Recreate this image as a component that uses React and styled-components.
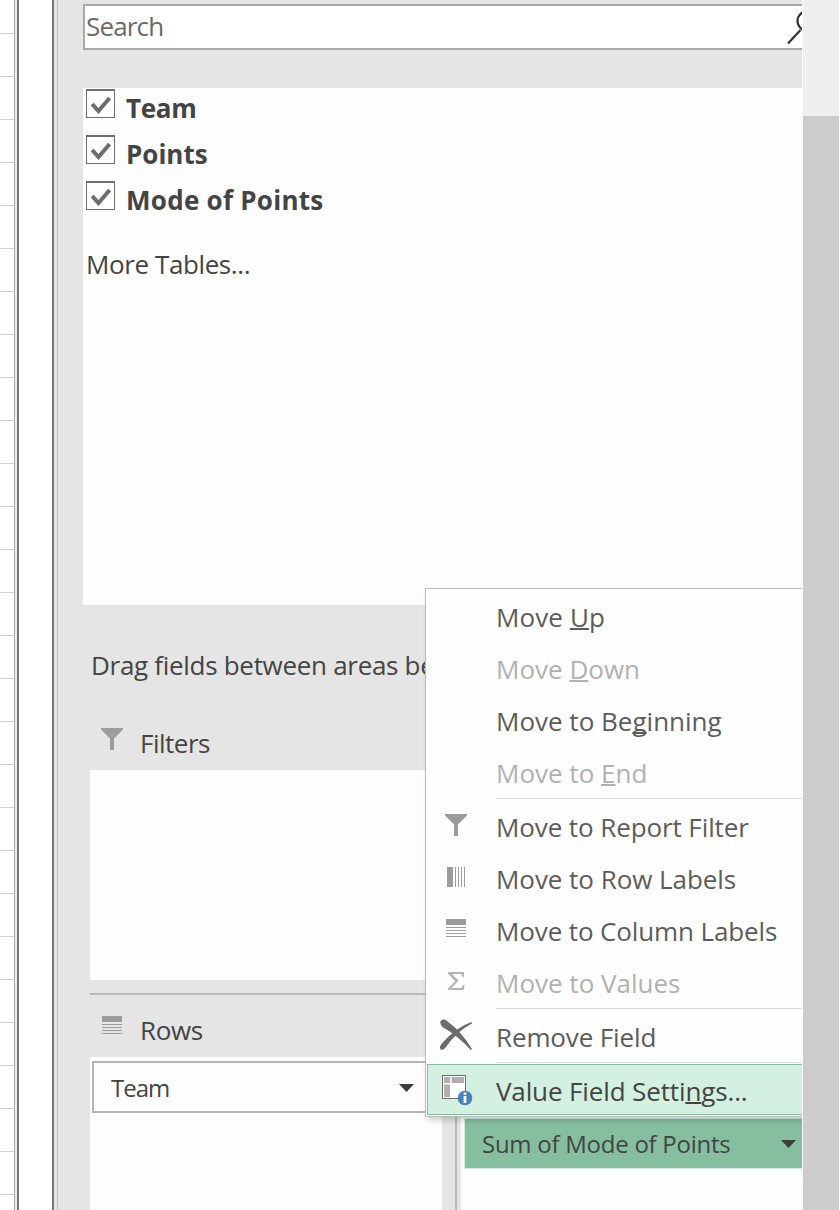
import React from "react";
import styled, { createGlobalStyle } from "styled-components";

const Global = createGlobalStyle`
  *, *::before, *::after { box-sizing: border-box; }
  html, body { margin: 0; padding: 0; background: #fff; overflow: hidden; }
  body { font-family: "Open Sans", "Noto Sans", sans-serif; font-size: 26px; color: #444; }
  svg { display: block; flex: none; }
`;

const Screen = styled.div`
  display: flex;
  width: 840px;
  height: 1210px;
  overflow: hidden;
  background: #fff;
`;

const Sheet = styled.div`
  width: 15px;
  flex: none;
  border-right: 1px solid #a6a6a6;
  background: repeating-linear-gradient(to bottom, #fff 0 42px, #d0d0d0 42px 43px);
  background-position: 0 -9px;
`;

const SheetEdge = styled.div`
  width: 39px;
  flex: none;
  border-left: 2px solid #ececec;
  background: linear-gradient(to right, #757575 0 2px, #fff 2px 35px, #757575 35px 37px);
`;

const PaneEdge = styled.div`
  width: 4px;
  flex: none;
  background: #e5e5e5;
  border-right: 1px solid #c0c0c0;
`;

const Pane = styled.main`
  position: relative;
  display: flex;
  flex-direction: column;
  width: 744px;
  flex: none;
  padding: 4px 0 0 25px;
  overflow: hidden;
  background: #e5e5e5;
`;

const Label = styled.span`
  white-space: pre;
  line-height: 36px;
  letter-spacing: ${(p) => p.$ls || 0}px;
`;

const SearchBox = styled.div`
  display: flex;
  align-items: center;
  justify-content: space-between;
  height: 46px;
  flex: none;
  padding-left: 1px;
  border: 2px solid #a9a9a9;
  border-right: 0;
  background: #fff;
  color: #6a6a6a;
  ${Label} { padding-bottom: 2px; }
`;

const FieldList = styled.section`
  height: 517px;
  flex: none;
  margin-top: 38px;
  padding: 1px 0 0 3px;
  background: #fdfdfd;
`;

const Field = styled.div`
  display: flex;
  height: 46px;
  gap: 11px;
  font-weight: 700;
  ${Label} { padding-top: 1px; }
`;

const CheckBox = styled.span`
  display: grid;
  place-items: center;
  width: 29px;
  height: 29px;
  flex: none;
  padding-top: 1px;
  border: 1px solid #6e6e6e;
  border-top-width: 2px;
  background: #fff;
`;

const MoreTables = styled.div`
  display: flex;
  padding-top: 19px;
`;

const Hint = styled.div`
  display: flex;
  padding: 42px 0 0 8px;
`;

const Area = styled.section`
  display: flex;
  flex-direction: column;
  margin-left: 7px;
`;

const AreaTitle = styled.div`
  display: flex;
  align-items: flex-start;
  height: ${(p) => p.$h}px;
  padding: ${(p) => p.$top}px 0 0 10px;
  ${Label} { margin: -2px 0 0 16px; }
`;

const FilterDrop = styled.div`
  height: 210px;
  background: #fdfdfd;
`;

const Bottom = styled.div`
  display: flex;
  flex: 1;
  margin: 13px 0 0 7px;
  border-top: 2px solid #b8b8b8;
`;

const Column = styled.div`
  display: flex;
  flex-direction: column;
  width: ${(p) => p.$w}px;
  flex: none;
`;

const Divider = styled.div`
  width: 2px;
  flex: none;
  margin: 0 4px 0 13px;
  background: #b8b8b8;
`;

const DropZone = styled.div`
  flex: 1;
  padding: 4px 2px 0;
  background: #fdfdfd;
`;

const ValueZone = styled(DropZone)`
  padding: 61px 0 0 3px;
`;

const FieldButton = styled.div`
  display: flex;
  align-items: center;
  justify-content: space-between;
  height: 52px;
  padding: 2px 24px 0 17px;
  border: 2px solid #b4b4b4;
  background: #fdfdfd;
  font-size: 24px;
`;

const ActiveButton = styled(FieldButton)`
  height: 51px;
  padding: 1px 6px 0 17px;
  border: 1px solid #d2eedf;
  border-right: 0;
  background: #86bf9f;
`;

const Menu = styled.div`
  position: absolute;
  left: 367px;
  top: 588px;
  width: 390px;
  height: 529px;
  padding: 1px 0 0 1px;
  border: 1px solid #bdbdbd;
  background: #fefefe;
  box-shadow: 3px 3px 6px rgba(0, 0, 0, 0.2);
`;

const MenuItem = styled.div`
  display: flex;
  align-items: center;
  height: 52px;
  padding-top: 1px;
  color: ${(p) => (p.$off ? "#b1b1b1" : "#5c5c5c")};
  u { text-decoration-thickness: 2px; text-underline-offset: 1px; text-decoration-skip-ink: none; }
`;

const ActiveItem = styled(MenuItem)`
  height: 51px;
  padding-top: 2px;
  border: 1px solid #86bf9f;
  background: #d3f0e0;
  color: #444;
`;

const IconCell = styled.span`
  display: flex;
  align-items: center;
  justify-content: center;
  width: 58px;
  height: 50px;
  margin-right: ${(p) => (p.$inset ? 10 : 11)}px;
  padding-bottom: ${(p) => (p.$inset ? 2 : 4)}px;
  flex: none;
`;

const Separator = styled.div`
  height: 2px;
  margin-left: 69px;
  border-top: 1px solid #d9d9d9;
`;

const ScrollBar = styled.div`
  width: 36px;
  flex: none;
  margin-left: 1px;
  padding-top: 116px;
  background: #efefef;
`;

const Thumb = styled.div`
  height: 100%;
  background: #cccccc;
`;

const Magnifier = () => (
  <svg width="17" height="42" viewBox="0 0 17 42" fill="none" stroke="#333" strokeWidth="2.200">
    <circle cx="22" cy="15" r="9.500" />
    <path d="M3 37.500L15.500 24" />
  </svg>
);

const Check = () => (
  <svg width="20" height="18" viewBox="0 0 20 18" fill="none" stroke="#6e6e6e" strokeWidth="4">
    <path d="M1.200 8L7.500 15L18.600 2" />
  </svg>
);

const Funnel = () => (
  <svg width="24" height="24" viewBox="0 0 24 24" fill="#9c9c9c">
    <path d="M1 1H23V2.500L14 11.500V23H10V11.500L1 2.500Z" />
  </svg>
);

const RowsIcon = () => (
  <svg width="24" height="24" viewBox="0 0 24 24" fill="#9c9c9c" shapeRendering="crispEdges">
    <path d="M2 2H22V8H2ZM2 10H22V11H2ZM2 13H22V14H2ZM2 16H22V17H2ZM2 19H22V20H2Z" />
  </svg>
);

const ColumnsIcon = () => (
  <svg width="24" height="24" viewBox="0 0 24 24" fill="#9c9c9c" shapeRendering="crispEdges">
    <path d="M3 2H9V22H3ZM11 2H12V22H11ZM14 2H15V22H14ZM17 2H18V22H17ZM20 2H21V22H20Z" />
  </svg>
);

const SigmaIcon = () => (
  <svg width="24" height="24" viewBox="0 0 24 24" fill="#b5b5b5">
    <path d="M4 3H20V8H18.500Q18 5 16 5H8L14.500 11.500L7.500 19H16Q18.500 19 19 16H20.500L20 21H4V19.500L11 12.200L4 4.500Z" />
  </svg>
);

const RemoveIcon = () => (
  <svg width="34" height="32" viewBox="0 0 34 32" fill="#6b6b6b">
    <path d="M2 1.500Q5 -0.500 8 2Q22 12 33 30L31.800 31Q18 16 3.500 8Q0 4 2 1.500Z" />
    <path d="M32.500 3L33 4.500Q18 12 7 28Q4 32 1.500 30.500Q0 28 2 25.500Q17 8 32.500 3Z" />
  </svg>
);

const SettingsIcon = () => (
  <svg width="32" height="32" viewBox="0 0 32 32">
    <rect x="1.500" y="1.500" width="23" height="23" fill="#fff" stroke="#6b6b6b" />
    <path d="M3 3H9V9H3ZM10.500 3H23V9H10.500ZM3 10.500H9V23H3Z" fill="#b3adb1" />
    <circle cx="24" cy="24" r="7.300" fill="#4a80bb" />
    <path d="M22.600 18.500H25.400V20.800H22.600ZM22.600 22H25.400V29H22.600Z" fill="#fff" />
  </svg>
);

const Caret = () => (
  <svg width="15" height="8" viewBox="0 0 15 8" fill="#3c3c3c">
    <path d="M0 0H15L7.500 8Z" />
  </svg>
);

const fields = [
  { name: "Team", ls: -0.3 },
  { name: "Points", ls: 0 },
  { name: "Mode of Points", ls: 0.27 },
];

const menu = [
  { text: ["Move ", "U", "p"], ls: 0.1 },
  { text: ["Move ", "D", "own"], off: true, ls: 0 },
  { text: ["Move to Be", "g", "inning"], ls: 0 },
  { text: ["Move to ", "E", "nd"], off: true, ls: 0 },
  null,
  { text: ["Move to Report Filter"], icon: <Funnel />, ls: -0.1 },
  { text: ["Move to Row Labels"], icon: <ColumnsIcon />, ls: -0.05 },
  { text: ["Move to Column Labels"], icon: <RowsIcon />, ls: -0.12 },
  { text: ["Move to Values"], icon: <SigmaIcon />, off: true, ls: 0 },
  null,
  { text: ["Remove Field"], icon: <RemoveIcon />, ls: -0.13 },
  null,
  { text: ["Value Field Setti", "n", "gs..."], icon: <SettingsIcon />, active: true, ls: -0.13 },
];

function MenuRow({ entry }) {
  if (!entry) return <Separator />;
  const Item = entry.active ? ActiveItem : MenuItem;
  const [before, key, after] = entry.text;
  return (
    <Item $off={entry.off}>
      <IconCell $inset={entry.active}>{entry.icon}</IconCell>
      <Label $ls={entry.ls}>
        {before}
        {key && <u>{key}</u>}
        {after}
      </Label>
    </Item>
  );
}

export default function App() {
  return (
    <>
      <Global />
      <Screen>
        <Sheet />
        <SheetEdge />
        <PaneEdge />
        <Pane>
          <SearchBox>
            <Label $ls={-0.85}>Search</Label>
            <Magnifier />
          </SearchBox>
          <FieldList>
            {fields.map((f) => (
              <Field key={f.name}>
                <CheckBox><Check /></CheckBox>
                <Label $ls={f.ls}>{f.name}</Label>
              </Field>
            ))}
            <MoreTables><Label $ls={-0.4}>More Tables...</Label></MoreTables>
          </FieldList>
          <Hint><Label $ls={-0.3}>Drag fields between areas below:</Label></Hint>
          <Area>
            <AreaTitle $h={87} $top={44}>
              <Funnel />
              <Label $ls={-0.5}>Filters</Label>
            </AreaTitle>
            <FilterDrop />
          </Area>
          <Bottom>
            <Column $w={352}>
              <AreaTitle $h={62} $top={19}>
                <RowsIcon />
                <Label $ls={-0.4}>Rows</Label>
              </AreaTitle>
              <DropZone>
                <FieldButton><Label $ls={-1}>Team</Label><Caret /></FieldButton>
              </DropZone>
            </Column>
            <Divider />
            <Column $w={341}>
              <AreaTitle $h={62} $top={19} />
              <ValueZone>
                <ActiveButton><Label $ls={-0.26}>Sum of Mode of Points</Label><Caret /></ActiveButton>
              </ValueZone>
            </Column>
          </Bottom>
          <Menu>
            {menu.map((entry, i) => <MenuRow key={i} entry={entry} />)}
          </Menu>
        </Pane>
        <ScrollBar><Thumb /></ScrollBar>
      </Screen>
    </>
  );
}
